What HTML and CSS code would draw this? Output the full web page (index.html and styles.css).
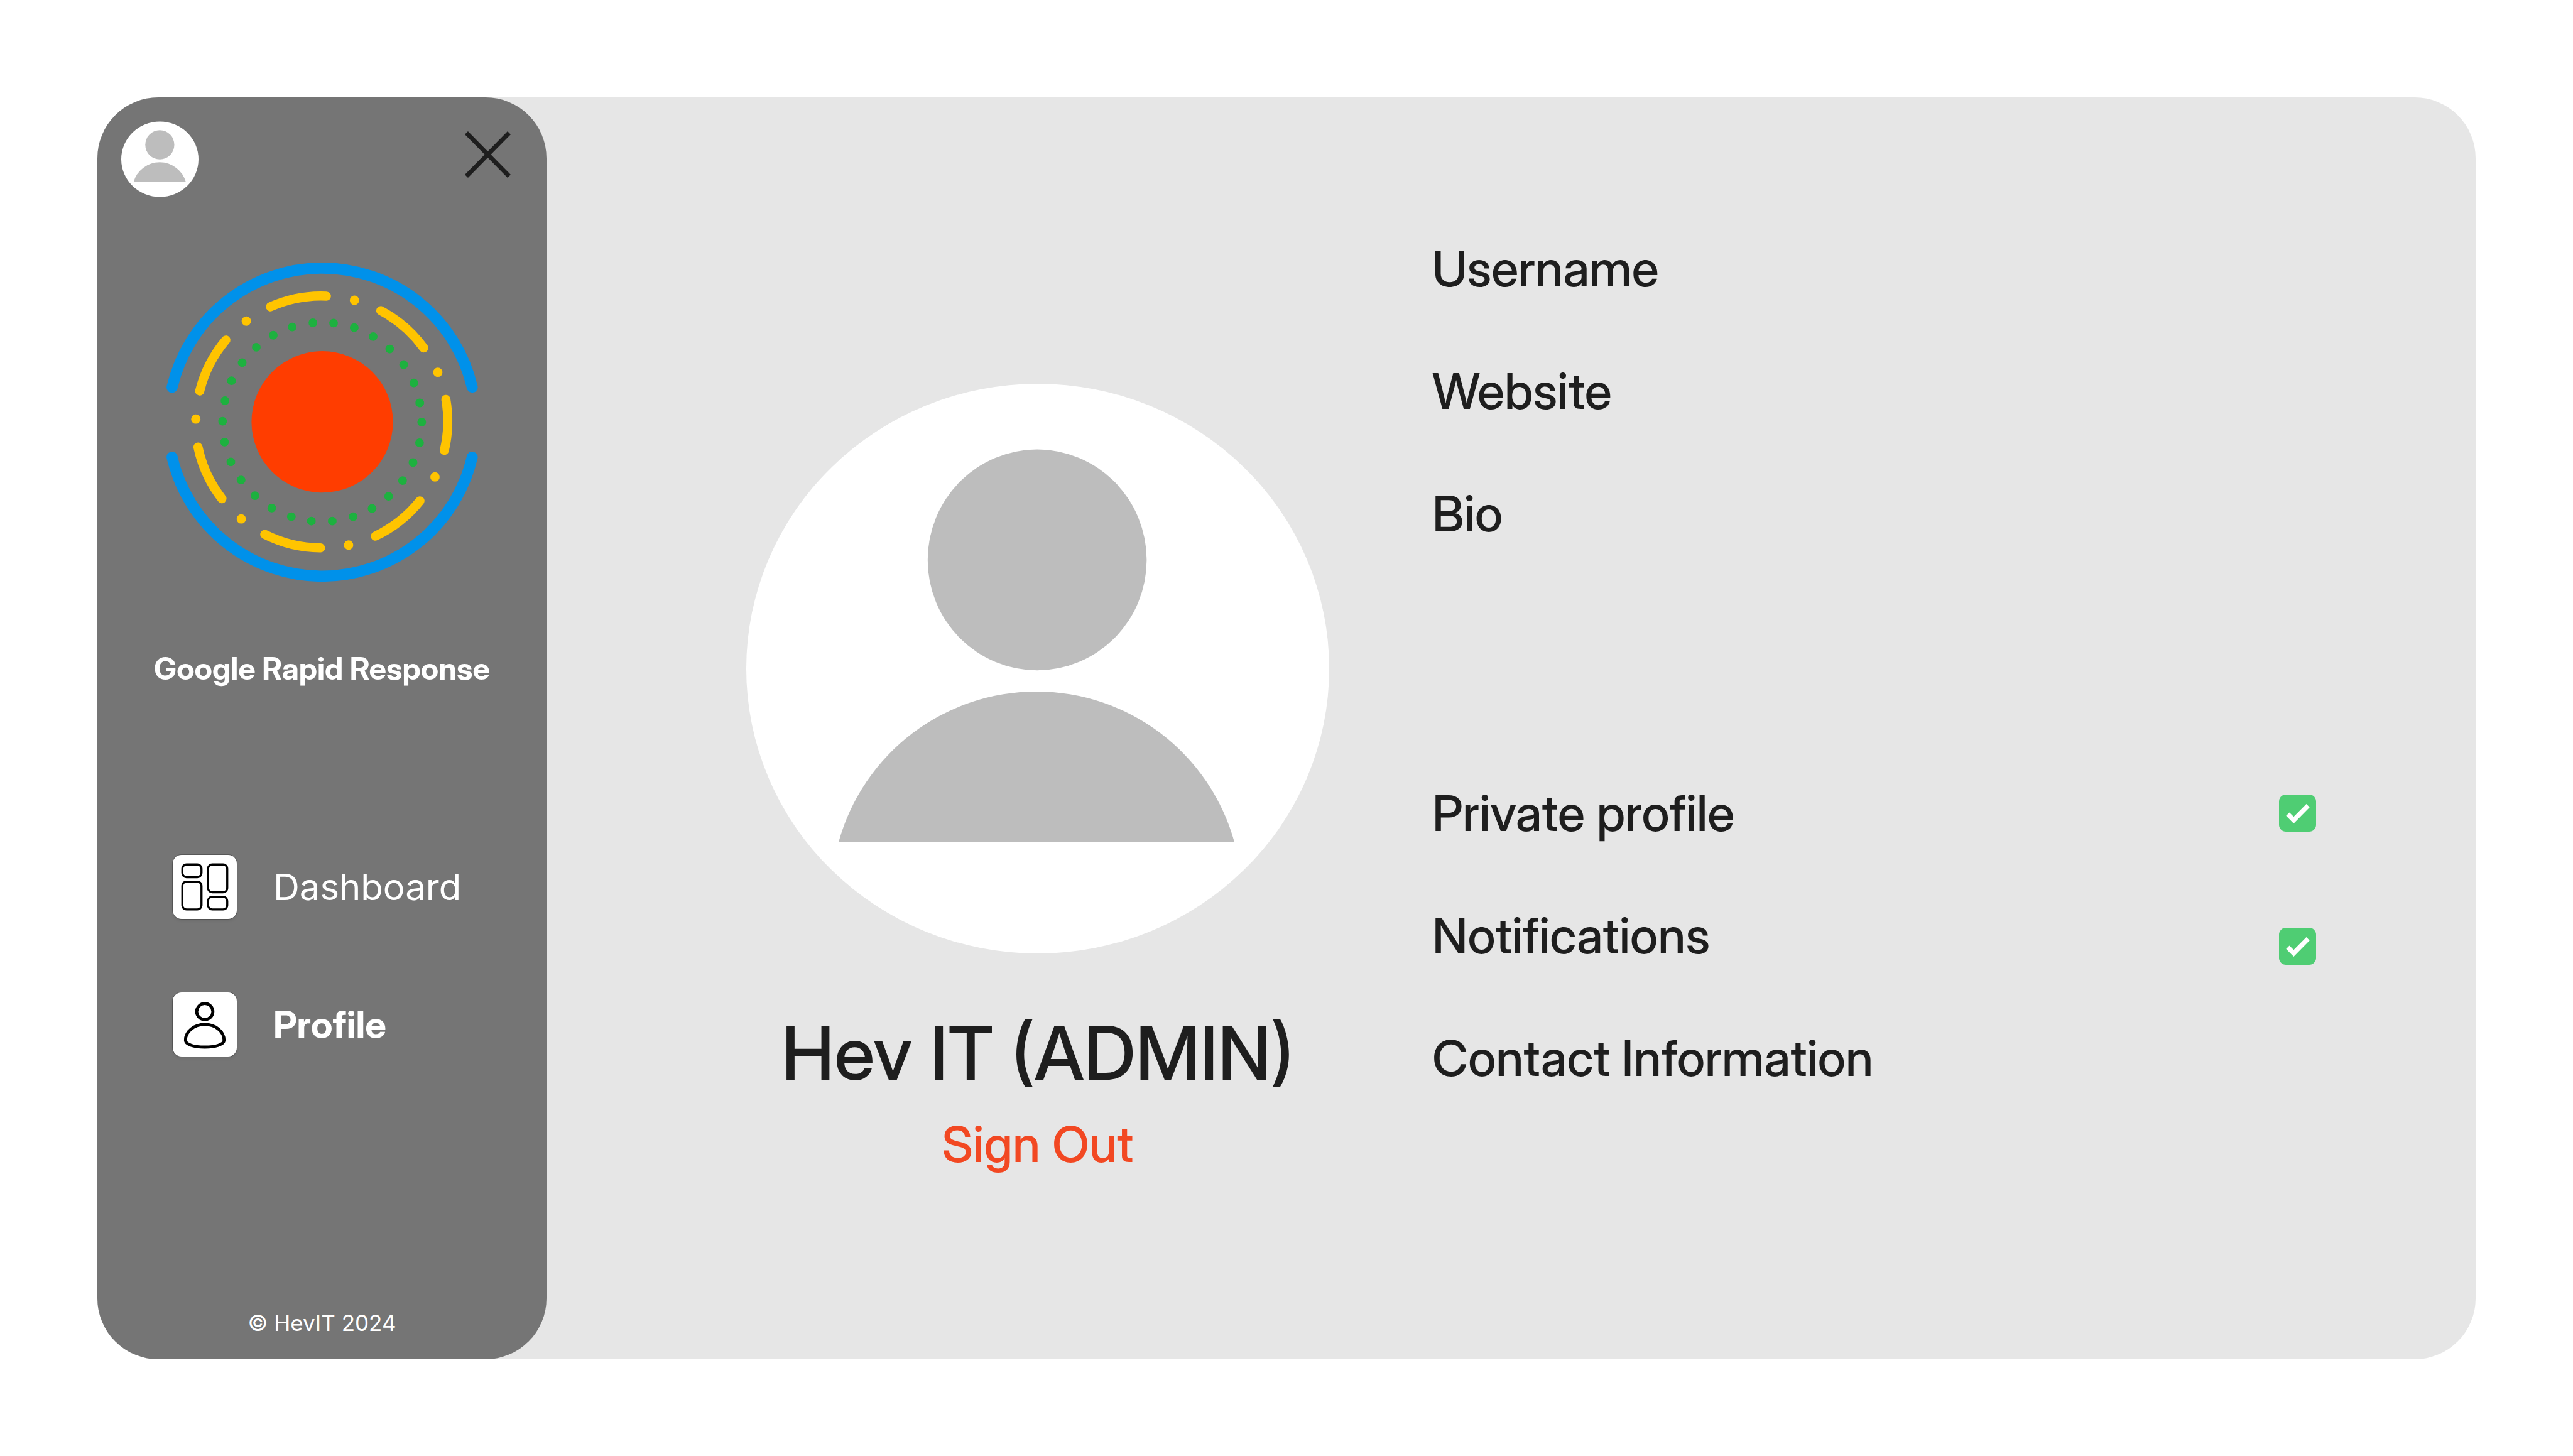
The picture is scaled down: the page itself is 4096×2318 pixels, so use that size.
FILE: index.html
```html
<!DOCTYPE html>
<html lang="en">
<head>
<meta charset="utf-8">
<title>Google Rapid Response – Profile</title>
<link rel="stylesheet" href="styles.css">
</head>
<body>
<svg class="sprite" aria-hidden="true">
  <symbol id="avatar" viewBox="0 0 1536 1501">
    <ellipse cx="768" cy="750.5" rx="768" ry="750.5" fill="#fff"/>
    <ellipse cx="766.5" cy="464" rx="288.5" ry="291" fill="#bdbdbd"/>
    <path d="M243.500 1207A541 541 0 0 1 1286 1207Z" fill="#bdbdbd"/>
  </symbol>
</svg>
<div class="panel">
  <aside class="sidebar">
    <header class="topbar">
      <svg class="avatar-small" role="img" aria-label="Account"><use href="#avatar"/></svg>
      <button class="close" type="button" aria-label="Close menu">
        <svg viewBox="0 0 73 74"><path d="M2.500 2.500L70.500 71.500M70.500 2.500L2.500 71.500" stroke="#1e1e1e" stroke-width="7" fill="none"/></svg>
      </button>
    </header>
    <svg class="logo" viewBox="0 0 1562 1576" role="img" aria-label="Google Rapid Response logo">
      <g fill="none" stroke="#0091ea" stroke-width="51" stroke-linecap="round">
        <path d="M91 628A708 708 0 0 1 1470 627"/>
        <path d="M91 949A708 708 0 0 0 1470 949"/>
      </g>
      <g fill="none" stroke="#ffc400" stroke-width="42" stroke-linecap="round">
        <path d="M543 258A579 579 0 0 1 800 209"/>
        <path d="M1050 276A579 579 0 0 1 1247 447"/>
        <path d="M1349 684A579 579 0 0 1 1342 918"/>
        <path d="M1230 1150A579 579 0 0 1 1025 1312"/>
        <path d="M773 1366A579 579 0 0 1 517 1304"/>
        <path d="M320 1140A579 579 0 0 1 210 903"/>
        <path d="M218 645A579 579 0 0 1 338 411"/>
      </g>
      <path fill="none" stroke="#ffc400" stroke-width="43" stroke-linecap="round" d="M929 228h0M1312 559h0M1299 1040h0M902 1353h0M409 1233h0M200 774h0M432 324h0"/>
      <path fill="none" stroke="#1db13f" stroke-width="40" stroke-linecap="round" d="M738 332h0M833 333h0M928 354h0M1015 395h0M1091 452h0M1155 524h0M1202 608h0M1229 700h0M1238 788h0M1228 883h0M1198 974h0M1150 1057h0M1086 1129h0M1010 1185h0M923 1223h0M827 1243h0M731 1243h0M639 1223h0M549 1183h0M472 1126h0M408 1054h0M361 971h0M332 880h0M323 784h0M334 690h0M364 598h0M413 515h0M478 444h0M556 389h0M643 351h0"/>
      <circle cx="781" cy="787" r="325" fill="#ff3d00"/>
    </svg>
    <h2 class="brand">Google Rapid Response</h2>
    <nav class="nav">
      <a class="nav-item" href="#dashboard">
        <svg class="nav-icon" viewBox="0 0 169 169" fill="none" stroke="#000" stroke-width="5.500">
          <rect x="25.300" y="25.300" width="50.500" height="33.500" rx="11"/>
          <rect x="25.300" y="70.500" width="50.500" height="73.500" rx="11"/>
          <rect x="93.200" y="25.300" width="50.500" height="73.500" rx="11"/>
          <rect x="93.200" y="110.500" width="50.500" height="33.500" rx="11"/>
        </svg>
        <span>Dashboard</span>
      </a>
      <a class="nav-item current" href="#profile" aria-current="page">
        <svg class="nav-icon" viewBox="0 0 169 169" fill="none" stroke="#000" stroke-width="8">
          <circle cx="84.500" cy="50.500" r="21.300"/>
          <path d="M33.600 126C33.600 103 56 84.400 84.500 84.400S135.400 103 135.400 126C135.400 138 112 144.100 84.500 144.100S33.600 138 33.600 126Z"/>
        </svg>
        <span>Profile</span>
      </a>
    </nav>
    <footer class="copyright">© HevIT 2024</footer>
  </aside>
  <main class="content">
    <section class="identity">
      <svg class="avatar-large" role="img" aria-label="Profile picture"><use href="#avatar"/></svg>
      <h1 class="name">Hev IT (ADMIN)</h1>
      <button class="sign-out" type="button">Sign Out</button>
    </section>
    <section class="details">
      <div class="group">
        <div class="row">Username</div>
        <div class="row">Website</div>
        <div class="row">Bio</div>
      </div>
      <div class="group">
        <div class="row">
          <label for="private">Private profile</label>
          <input class="check" id="private" type="checkbox" checked>
        </div>
        <div class="row row-end">
          <label for="notifications">Notifications</label>
          <input class="check" id="notifications" type="checkbox" checked>
        </div>
        <div class="row">Contact Information</div>
      </div>
    </section>
  </main>
</div>
</body>
</html>
```
FILE: styles.css
```css
* {
  box-sizing: border-box;
}

body {
  display: flex;
  min-height: 100vh;
  margin: 0;
  padding: 155px 155px 154px;
  background: #fff;
  color: #1e1e1e;
  font-family: "Inter Display", Inter, "Liberation Sans", sans-serif;
}

button {
  padding: 0;
  border: 0;
  background: none;
  font: inherit;
  cursor: pointer;
}

svg {
  display: block;
}

.sprite {
  position: absolute;
  width: 0;
  height: 0;
}

.panel {
  display: flex;
  flex: 1;
  border-radius: 97px;
  background: #e6e6e6;
}

/* Sidebar */
.sidebar {
  display: flex;
  flex: 0 0 715px;
  flex-direction: column;
  align-items: center;
  padding: 38px 0;
  border-radius: 97px;
  background: #757575;
  color: #fff;
}

.topbar {
  display: flex;
  justify-content: space-between;
  align-items: flex-start;
  width: 100%;
  padding: 0 57px 0 38px;
}

.avatar-small {
  width: 123px;
  height: 121px;
}

.close {
  width: 73px;
  height: 74px;
  margin-top: 16px;
}

.logo {
  width: 542px;
  height: 546px;
  margin-top: 85px;
}

.brand {
  margin: 91px 0 0;
  font-size: 49px;
  font-weight: 700;
  line-height: 58px;
}

.nav {
  display: flex;
  flex-direction: column;
  gap: 117px;
  width: 100%;
  margin-top: 267px;
  padding-left: 120px;
}

.nav-item {
  display: flex;
  align-items: center;
  gap: 58px;
  color: inherit;
  font-family: Inter, "Liberation Sans", sans-serif;
  font-size: 58px;
  line-height: 70px;
  text-decoration: none;
}

.current {
  font-family: "Inter Display", Inter, "Liberation Sans", sans-serif;
  font-size: 60px;
  font-weight: 700;
}

.nav-icon {
  width: 102px;
  height: 102px;
  border-radius: 14px;
  background: #fff;
  box-shadow: 0 0 0 1px rgba(0, 0, 0, 0.25), 0 3px 5px rgba(0, 0, 0, 0.08);
}

.copyright {
  margin-top: auto;
  font-family: Inter, "Liberation Sans", sans-serif;
  font-size: 35px;
  line-height: 40px;
}

/* Profile */
.content {
  display: flex;
  flex: 1;
  gap: 164px;
  padding: 226px 254px 0 318px;
}

.identity {
  display: flex;
  flex: 0 0 928px;
  flex-direction: column;
  align-items: center;
  padding-top: 230px;
}

.avatar-large {
  width: 928px;
  height: 907px;
}

.name {
  margin: 88px 0 0;
  font-size: 118px;
  font-weight: 500;
  line-height: 140px;
  white-space: nowrap;
}

.sign-out {
  margin-top: 29px;
  color: #f24822;
  font-size: 79px;
  font-weight: 500;
  line-height: 93px;
}

.details {
  display: flex;
  flex: 1;
  flex-direction: column;
  gap: 384px;
  font-size: 79px;
  font-weight: 500;
  line-height: 93px;
}

.group {
  display: flex;
  flex-direction: column;
  gap: 102px;
}

.row {
  display: flex;
  justify-content: space-between;
  align-items: center;
}

.row-end {
  align-items: flex-end;
}

.check {
  width: 59px;
  height: 59px;
  margin: 0;
  border-radius: 11px;
  appearance: none;
  background: #4fcd73;
}

.check:checked {
  background-image: url("data:image/svg+xml,%3Csvg xmlns='http://www.w3.org/2000/svg' viewBox='0 0 293 293'%3E%3Cpath d='M56 168L82 142L116 175L216 75L242 101L116 228Z' fill='%23fff'/%3E%3C/svg%3E");
  background-size: 100% 100%;
}
```
